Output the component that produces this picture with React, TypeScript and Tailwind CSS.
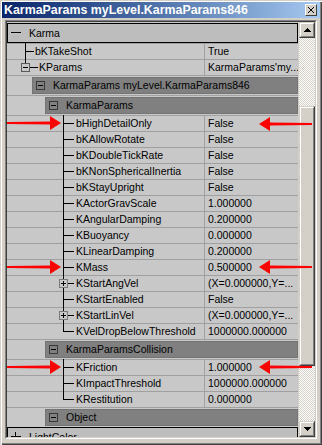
import React from 'react';

type Row = { name: string; value: string; expandable?: boolean; last?: boolean };

const karmaParams: Row[] = [
  { name: 'bHighDetailOnly', value: 'False' },
  { name: 'bKAllowRotate', value: 'False' },
  { name: 'bKDoubleTickRate', value: 'False' },
  { name: 'bKNonSphericalInertia', value: 'False' },
  { name: 'bKStayUpright', value: 'False' },
  { name: 'KActorGravScale', value: '1.000000' },
  { name: 'KAngularDamping', value: '0.200000' },
  { name: 'KBuoyancy', value: '0.000000' },
  { name: 'KLinearDamping', value: '0.200000' },
  { name: 'KMass', value: '0.500000' },
  { name: 'KStartAngVel', value: '(X=0.000000,Y=...', expandable: true },
  { name: 'KStartEnabled', value: 'False' },
  { name: 'KStartLinVel', value: '(X=0.000000,Y=...', expandable: true },
  { name: 'KVelDropBelowThreshold', value: '1000000.000000', last: true },
];

const collision: Row[] = [
  { name: 'KFriction', value: '1.000000' },
  { name: 'KImpactThreshold', value: '1000000.000000' },
  { name: 'KRestitution', value: '0.000000', last: true },
];

// tree connector for rows nested under a category header
const NestedGlyph = ({ expandable, last }: { expandable?: boolean; last?: boolean }) => (
  <svg width="69" height="16" className="-mt-[1px] shrink-0" shapeRendering="crispEdges">
    {expandable ? (
      <>
        <line x1="56.5" y1="0" x2="56.5" y2="4" stroke="#000" />
        <rect x="52.5" y="4.5" width="8" height="8" fill="none" stroke="#7a7a7a" />
        <line x1="54" y1="8.5" x2="59" y2="8.5" stroke="#000" />
        <line x1="56.5" y1="6" x2="56.5" y2="11" stroke="#000" />
        <line x1="61" y1="8.5" x2="67" y2="8.5" stroke="#000" />
        {!last && <line x1="56.5" y1="13" x2="56.5" y2="16" stroke="#000" />}
      </>
    ) : (
      <>
        <line x1="56.5" y1="0" x2="56.5" y2={last ? 9 : 16} stroke="#000" />
        <line x1="56" y1="8.5" x2="67" y2="8.5" stroke="#000" />
      </>
    )}
  </svg>
);

const PropRow = ({ name, value, glyph }: { name: string; value: string; glyph: React.ReactNode }) => (
  <div className="h-[16px] border-t border-[#a0a0a0] flex">
    <div className="w-[198px] shrink-0 border-r border-[#a0a0a0] flex items-start">
      {glyph}
      <span className="flex-1 min-w-0 overflow-hidden whitespace-nowrap leading-[15px]">{name}</span>
    </div>
    <div className="flex-1 pl-[3px] leading-[15px] whitespace-nowrap overflow-hidden">{value}</div>
  </div>
);

const MinusBox = () => (
  <svg width="9" height="9" className="shrink-0" shapeRendering="crispEdges">
    <rect x="0.5" y="0.5" width="8" height="8" fill="none" stroke="#383838" />
    <line x1="2" y1="4.5" x2="7" y2="4.5" stroke="#000" />
  </svg>
);

const CategoryHeader = ({ label, indent }: { label: string; indent: 'l1' | 'l2' }) => (
  <div className="h-[20px] border-t border-[#a0a0a0] flex pt-[1px]">
    <div className={indent === 'l1' ? 'w-[25px] shrink-0' : 'w-[38px] shrink-0'} />
    <div className="flex-1 h-[17px] bg-[#808080] border border-[#747474] flex items-center pl-[3px]">
      <MinusBox />
      <span className="ml-[8px] whitespace-nowrap leading-[15px]">{label}</span>
    </div>
  </div>
);

const TopHeader = ({ label, open }: { label: string; open: boolean }) => (
  <div className="h-[20px] border border-black bg-[#bdbdbd] flex items-center pl-[3px]">
    <svg width="10" height="10" className="shrink-0" shapeRendering="crispEdges">
      <line x1="0" y1="4.5" x2="10" y2="4.5" stroke="#000" />
      {!open && <line x1="4.5" y1="0" x2="4.5" y2="10" stroke="#000" />}
    </svg>
    <span className="ml-[8px] leading-[15px]">{label}</span>
  </div>
);

const RaisedButton = ({ dir }: { dir: 'up' | 'down' }) => (
  <div className="h-[16px] w-[16px] bg-[#d4d0c8] border border-t-[#d4d0c8] border-l-[#d4d0c8] border-b-[#404040] border-r-[#404040] shrink-0">
    <div className="h-full w-full border border-t-white border-l-white border-b-[#808080] border-r-[#808080] flex items-center justify-center">
      <svg width="7" height="4" shapeRendering="crispEdges">
        <polygon points={dir === 'up' ? '3.5,0 7,4 0,4' : '0,0 7,0 3.5,4'} fill="#000" />
      </svg>
    </div>
  </div>
);

const RightArrow = ({ top }: { top: string }) => (
  <svg width="54" height="14" className={`absolute left-[7px] ${top}`}>
    <polygon points="0,6 44,5.5 44,8.5 0,8" fill="#ff0000" />
    <polygon points="43,0 54,7 43,14" fill="#ff0000" />
  </svg>
);

const LeftArrow = ({ top }: { top: string }) => (
  <svg width="53" height="14" className={`absolute left-[259px] ${top}`}>
    <polygon points="0,7 11,0 11,14" fill="#ff0000" />
    <polygon points="10,5.5 53,6 53,8 10,8.5" fill="#ff0000" />
  </svg>
);

export default function App() {
  return (
    <div className="relative w-[322px] h-[445px] bg-[#d4d0c8] p-[2px] overflow-hidden font-['Liberation_Sans',Arial,sans-serif] text-[10.5px] text-black shadow-[inset_1px_1px_0_#d4d0c8,inset_2px_2px_0_#ffffff,inset_-1px_-1px_0_#404040,inset_-2px_-2px_0_#808080]">
      {/* title bar */}
      <div className="h-[16px] bg-gradient-to-r from-[#0a246a] to-[#a6caf0] flex items-center pl-[2px] pr-[3px]">
        <span className="flex-1 text-white font-bold text-[12.4px] leading-[16px] whitespace-nowrap">
          KarmaParams myLevel.KarmaParams846
        </span>
        <div className="h-[12px] w-[12px] bg-[#d4d0c8] border border-t-white border-l-white border-b-[#404040] border-r-[#404040] flex items-center justify-center">
          <svg width="6" height="6" shapeRendering="crispEdges">
            <path d="M0 0 L6 6 M6 0 L0 6" stroke="#000" strokeWidth="1.3" />
          </svg>
        </div>
      </div>

      {/* property list frame */}
      <div className="mt-[2px] ml-[3px] w-[312px] h-[419px] border border-t-[#808080] border-l-[#808080] border-b-white border-r-white">
        <div className="h-full w-full border border-t-[#404040] border-l-[#404040] border-b-[#d4d0c8] border-r-[#d4d0c8] flex">
          <div className="w-[291px] h-full bg-[#c8c8c8] overflow-hidden pt-[1px]">
            <TopHeader label="Karma" open />
            <PropRow
              name="bKTakeShot"
              value="True"
              glyph={
                <svg width="28" height="16" className="-mt-[1px] shrink-0" shapeRendering="crispEdges">
                  <line x1="18.5" y1="0" x2="18.5" y2="16" stroke="#000" />
                  <line x1="18" y1="8.5" x2="27" y2="8.5" stroke="#000" />
                </svg>
              }
            />
            <PropRow
              name="KParams"
              value="KarmaParams'my..."
              glyph={
                <svg width="32" height="16" className="-mt-[1px] shrink-0" shapeRendering="crispEdges">
                  <line x1="18.5" y1="0" x2="18.5" y2="4" stroke="#000" />
                  <rect x="14.5" y="4.5" width="8" height="8" fill="none" stroke="#5a5a5a" />
                  <line x1="16" y1="8.5" x2="21" y2="8.5" stroke="#000" />
                  <line x1="23" y1="8.5" x2="31" y2="8.5" stroke="#000" />
                </svg>
              }
            />
            <CategoryHeader label="KarmaParams myLevel.KarmaParams846" indent="l1" />
            <CategoryHeader label="KarmaParams" indent="l2" />
            {karmaParams.map((r) => (
              <PropRow key={r.name} name={r.name} value={r.value} glyph={<NestedGlyph expandable={r.expandable} last={r.last} />} />
            ))}
            <CategoryHeader label="KarmaParamsCollision" indent="l2" />
            {collision.map((r) => (
              <PropRow key={r.name} name={r.name} value={r.value} glyph={<NestedGlyph last={r.last} />} />
            ))}
            <CategoryHeader label="Object" indent="l2" />
            <TopHeader label="LightColor" open={false} />
          </div>
          <div className="w-[1px] h-full bg-[#d4d0c8]" />
          {/* scrollbar */}
          <div className="w-[16px] h-full flex flex-col">
            <RaisedButton dir="up" />
            <div className="h-[68px] bg-[repeating-conic-gradient(#d4d0c8_0_25%,#ffffff_0_50%)] bg-[length:2px_2px]" />
            <div className="h-[260px] bg-[#d4d0c8] border border-t-[#d4d0c8] border-l-[#d4d0c8] border-b-[#404040] border-r-[#404040]">
              <div className="h-full w-full border border-t-white border-l-white border-b-[#808080] border-r-[#808080]" />
            </div>
            <div className="flex-1 bg-[repeating-conic-gradient(#d4d0c8_0_25%,#ffffff_0_50%)] bg-[length:2px_2px]" />
            <RaisedButton dir="down" />
          </div>
        </div>
      </div>

      {/* annotation arrows */}
      <RightArrow top="top-[116px]" />
      <RightArrow top="top-[260px]" />
      <RightArrow top="top-[360px]" />
      <LeftArrow top="top-[117px]" />
      <LeftArrow top="top-[260px]" />
      <LeftArrow top="top-[360px]" />
    </div>
  );
}
